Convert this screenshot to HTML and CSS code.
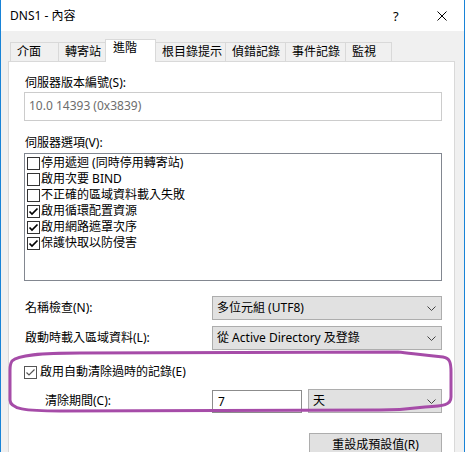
FILE: index.html
```html
<!DOCTYPE html>
<html>
<head>
<meta charset="utf-8">
<link rel="stylesheet" href="styles.css">
</head>
<body>
<div class="window">
  <div class="titlebar">
    <span class="title">DNS1 - 內容</span>
    <span class="help">?</span>
    <span class="close"><svg width="10" height="10" viewBox="0 0 10 10"><path d="M0.5 0.5 L9.5 9.5 M9.5 0.5 L0.5 9.5" stroke="#000" stroke-width="1" fill="none"/></svg></span>
  </div>
  <div class="body">
    <div class="tabs">
      <div class="tab t1">介面</div>
      <div class="tab t2">轉寄站</div>
      <div class="tab active">進階</div>
      <div class="tab t4">根目錄提示</div>
      <div class="tab t5">偵錯記錄</div>
      <div class="tab t5">事件記錄</div>
      <div class="tab t7">監視</div>
    </div>
    <div class="panel">
      <div class="label l-version">伺服器版本編號(S):</div>
      <div class="textbox disabled">10.0 14393 (0x3839)</div>
      <div class="label l-options">伺服器選項(V):</div>
      <div class="listbox">
        <div class="item"><span class="cb"></span>停用遞迴 (同時停用轉寄站)</div>
        <div class="item"><span class="cb"></span>啟用次要 BIND</div>
        <div class="item"><span class="cb"></span>不正確的區域資料載入失敗</div>
        <div class="item"><span class="cb"><svg width="11" height="11" viewBox="0 0 11 11"><path d="M1.5 5.5 L4 8 L9.5 2.5" fill="none" stroke="#000" stroke-width="1.7"/></svg></span>啟用循環配置資源</div>
        <div class="item"><span class="cb"><svg width="11" height="11" viewBox="0 0 11 11"><path d="M1.5 5.5 L4 8 L9.5 2.5" fill="none" stroke="#000" stroke-width="1.7"/></svg></span>啟用網路遮罩次序</div>
        <div class="item"><span class="cb"><svg width="11" height="11" viewBox="0 0 11 11"><path d="M1.5 5.5 L4 8 L9.5 2.5" fill="none" stroke="#000" stroke-width="1.7"/></svg></span>保護快取以防侵害</div>
      </div>
      <div class="form-row first-row">
        <span class="row-label">名稱檢查(N):</span>
        <div class="select">多位元組 (UTF8)<svg class="chev" width="9" height="5" viewBox="0 0 9 5"><path d="M0.5 0.5 L4.5 4.5 L8.5 0.5" fill="none" stroke="#444"/></svg></div>
      </div>
      <div class="form-row second-row">
        <span class="row-label">啟動時載入區域資料(L):</span>
        <div class="select">從 Active Directory 及登錄<svg class="chev" width="9" height="5" viewBox="0 0 9 5"><path d="M0.5 0.5 L4.5 4.5 L8.5 0.5" fill="none" stroke="#444"/></svg></div>
      </div>
      <div class="check-row">
        <span class="cb cb-soft"><svg width="11" height="11" viewBox="0 0 11 11"><path d="M1.5 5.5 L4 8 L9.5 2.5" fill="none" stroke="#555" stroke-width="1.2"/></svg></span>啟用自動清除過時的記錄(E)
      </div>
      <div class="period-row">
        <span class="row-label indent">清除期間(C):</span>
        <div class="input">7</div>
        <div class="select unit">天<svg class="chev" width="9" height="5" viewBox="0 0 9 5"><path d="M0.5 0.5 L4.5 4.5 L8.5 0.5" fill="none" stroke="#444"/></svg></div>
      </div>
      <div class="button-row">
        <div class="button">重設成預設值(R)</div>
      </div>
    </div>
  </div>
  <svg class="annotation" width="465" height="452" viewBox="0 0 465 452">
    <path d="M12 361 C18 355 40 353 80 353 L398 352 C410 353 420 355 443 357 C450 358 451 363 451 372 L451 397 C451 405 444 406 425 407 C410 409 400 410 380 410 L60 411 C25 411 10 409 10 400 L10 370 C10 366 10 364 12 361 Z" fill="none" stroke="#a64ca8" stroke-width="3"/>
  </svg>
</div>
</body>
</html>
```

FILE: styles.css
```css
* { box-sizing: border-box; }
html, body { margin: 0; padding: 0; }
body {
  font-family: "Noto Sans", "Noto Sans CJK TC", sans-serif;
  font-size: 12px;
  line-height: 16px;
  color: #000;
  background: #fff;
}
.window {
  position: relative;
  width: 465px;
  height: 452px;
  overflow: hidden;
  background: #f0f0f0;
  border-left: 1px solid #1883d7;
  border-right: 1px solid #1883d7;
}
.titlebar {
  height: 31px;
  background: #fff;
  display: flex;
  align-items: center;
  padding-left: 9px;
}
.title { flex: 1; }
.help { width: 14px; margin-right: 30px; font-size: 13px; }
.close { width: 10px; height: 10px; margin-right: 17px; display: flex; }
.body {
  padding: 8px 9px 0 7px;
}
.tabs {
  display: flex;
  align-items: flex-end;
  height: 22px;
  padding-left: 2px;
}
.tab {
  height: 19px;
  line-height: 18px;
  border: 1px solid #d9d9d9;
  border-bottom: none;
  background: #f0f0f0;
  margin-right: -1px;
  padding-left: 6px;
  white-space: nowrap;
}
.t1 { width: 49px; }
.t2 { width: 48px; }
.t4 { width: 71px; }
.t5 { width: 61px; }
.t7 { width: 47px; }
.tab.active {
  width: 51px;
  height: 23px;
  line-height: 16px;
  margin-bottom: -1px;
  background: #fff;
  position: relative;
  z-index: 1;
  padding-left: 7px;
}
.panel {
  background: #fff;
  border: 1px solid #d9d9d9;
  height: 400px;
  padding: 0 12px 0 15px;
}
.label { padding-left: 1px; }
.l-version { margin-top: 13px; }
.textbox {
  margin-top: 1px;
  height: 29px;
  border: 1px solid #cccccc;
  padding: 5px 4px;
}
.textbox.disabled { color: #6d6d6d; }
.l-options { margin-top: 14px; }
.listbox {
  margin-top: 2px;
  height: 128px;
  border: 1px solid #828790;
  padding: 1px 0 0 1px;
}
.item {
  height: 16px;
  display: flex;
  align-items: center;
}
.cb {
  width: 13px;
  height: 13px;
  border: 1px solid #333;
  background: #fff;
  margin: 0 1px 0 1px;
  display: flex;
  align-items: center;
  justify-content: center;
  flex-shrink: 0;
}
.form-row, .period-row {
  display: grid;
  grid-template-columns: 188px 1fr;
  align-items: center;
}
.first-row { margin-top: 15px; }
.second-row { margin-top: 6px; }
.row-label { padding-left: 1px; }
.row-label.indent { padding-left: 21px; }
.select {
  height: 24px;
  background: #e1e1e1;
  border: 1px solid #adadad;
  display: flex;
  align-items: center;
  justify-content: space-between;
  padding: 0 5px 0 4px;
}
.check-row {
  margin-top: 14px;
  display: flex;
  align-items: center;
  height: 16px;
}
.check-row .cb { margin: 0 3px 0 0; }
.cb-soft { border-color: #555; }
.period-row {
  margin-top: 9px;
  grid-template-columns: 188px 90px 1fr;
}
.input {
  height: 23px;
  border: 1px solid #8c8c8c;
  padding: 3px 5px;
}
.select.unit {
  margin-left: 6px;
  height: 24px;
}
.button-row {
  display: flex;
  justify-content: flex-end;
  margin-top: 20px;
}
.button {
  width: 133px;
  height: 23px;
  background: #e1e1e1;
  border: 1px solid #adadad;
  text-align: center;
  line-height: 21px;
}
.annotation {
  position: absolute;
  left: -1px;
  top: 0;
  pointer-events: none;
}
```
